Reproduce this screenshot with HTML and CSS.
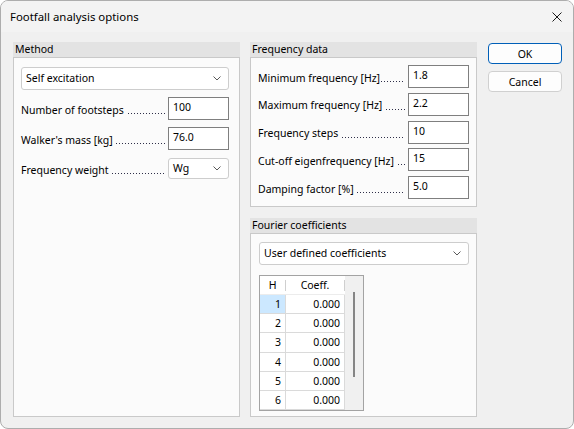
FILE: index.html
```html
<!DOCTYPE html>
<html lang="en">
<head>
    <meta charset="UTF-8">
    <title>Footfall analysis options</title>
    <link rel="stylesheet" href="styles.css">
</head>
<body>
    <div class="window">
        <div class="titlebar">
            <span class="title">Footfall analysis options</span>
            <svg class="close" width="10" height="10" viewBox="0 0 10 10"><path d="M0.5 0.5L9.5 9.5M9.5 0.5L0.5 9.5" stroke="#1b1b1b" stroke-width="1"/></svg>
        </div>

        <div class="content">
            <div class="group method">
                <div class="group-title">Method</div>
                <div class="group-body">
                    <div class="select">Self excitation<svg class="chev" width="8" height="5" viewBox="0 0 8 5"><path d="M0.5 0.5L4 4L7.5 0.5" fill="none" stroke="#5a5a5a" stroke-width="1"/></svg></div>

                    <div class="field">
                        <span class="label">Number of footsteps </span><span class="leader"></span>
                        <span class="input">100</span>
                    </div>
                    <div class="field">
                        <span class="label">Walker's mass [kg] </span><span class="leader"></span>
                        <span class="input">76.0</span>
                    </div>
                    <div class="field short">
                        <span class="label">Frequency weight </span><span class="leader"></span>
                        <span class="select small">Wg<svg class="chev" width="8" height="5" viewBox="0 0 8 5"><path d="M0.5 0.5L4 4L7.5 0.5" fill="none" stroke="#5a5a5a" stroke-width="1"/></svg></span>
                    </div>
                </div>
            </div>

            <div class="column">
                <div class="group freq">
                    <div class="group-title">Frequency data</div>
                    <div class="group-body">
                        <div class="field">
                            <span class="label">Minimum frequency [Hz]</span><span class="leader"></span>
                            <span class="input">1.8</span>
                        </div>
                        <div class="field">
                            <span class="label">Maximum frequency [Hz] </span><span class="leader"></span>
                            <span class="input">2.2</span>
                        </div>
                        <div class="field">
                            <span class="label">Frequency steps </span><span class="leader"></span>
                            <span class="input">10</span>
                        </div>
                        <div class="field">
                            <span class="label">Cut-off eigenfrequency [Hz] </span><span class="leader"></span>
                            <span class="input">15</span>
                        </div>
                        <div class="field">
                            <span class="label">Damping factor [%] </span><span class="leader"></span>
                            <span class="input">5.0</span>
                        </div>
                    </div>
                </div>

                <div class="group fourier">
                    <div class="group-title">Fourier coefficients</div>
                    <div class="group-body">
                        <div class="select">User defined coefficients<svg class="chev" width="8" height="5" viewBox="0 0 8 5"><path d="M0.5 0.5L4 4L7.5 0.5" fill="none" stroke="#5a5a5a" stroke-width="1"/></svg></div>

                        <div class="grid">
                            <table>
                                <tr><th class="h">H</th><th>Coeff.</th></tr>
                                <tr><td class="h current">1</td><td>0.000</td></tr>
                                <tr><td class="h">2</td><td>0.000</td></tr>
                                <tr><td class="h">3</td><td>0.000</td></tr>
                                <tr><td class="h">4</td><td>0.000</td></tr>
                                <tr><td class="h">5</td><td>0.000</td></tr>
                                <tr><td class="h">6</td><td>0.000</td></tr>
                            </table>
                            <div class="scroll"><div class="thumb"></div></div>
                        </div>
                    </div>
                </div>
            </div>

            <div class="buttons">
                <button class="default">OK</button>
                <button>Cancel</button>
            </div>
        </div>
    </div>
</body>
</html>
```

FILE: styles.css
```css
body {
    margin: 0;
    background-color: #ffffff;
    font-family: "Noto Sans", sans-serif;
    font-size: 10.5px;
    color: #000;
}
.window {
    width: 574px;
    height: 429px;
    box-sizing: border-box;
    border: 1px solid #adadad;
    border-radius: 8px;
    background-color: #f0f0f0;
    overflow: hidden;
}
.titlebar {
    height: 31px;
    display: flex;
    align-items: center;
    justify-content: space-between;
    padding: 0 11px 0 9px;
    background-color: #f3f3f3;
}
.title {
    font-size: 11.4px;
}
.content {
    display: flex;
    padding: 10px 11px 0 12px;
}
.group {
    display: flex;
    flex-direction: column;
    flex-shrink: 0;
    width: 227px;
}
.group-title {
    height: 15px;
    line-height: 14px;
    padding-left: 2px;
    background-color: #e3e3e3;
}
.group-body {
    flex: 1;
    border: 1px solid #c9c9c9;
    background-color: #fbfbfb;
}
.method {
    height: 375px;
}
.method .group-body {
    padding: 9px 10px 0 7px;
}
.column {
    display: flex;
    flex-direction: column;
    margin-left: 10px;
}
.freq {
    height: 165px;
}
.freq .group-body {
    display: flex;
    flex-direction: column;
    gap: 4.75px;
    padding: 7px 7px 0 7px;
}
.fourier {
    height: 199px;
    margin-top: 11px;
}
.fourier .group-body {
    padding: 8px 7px 0 8px;
}
.select {
    position: relative;
    height: 23px;
    box-sizing: border-box;
    border: 1px solid #cdcdcd;
    border-radius: 3px;
    background-color: #fff;
    padding-left: 4px;
    line-height: 20px;
}
.select.small {
    display: block;
    width: 61px;
    height: 21px;
    line-height: 18px;
}
.chev {
    position: absolute;
    right: 7px;
    top: 8px;
}
.select.small .chev {
    top: 7px;
}
.field {
    display: flex;
    align-items: center;
    height: 23px;
}
.method .field {
    margin-top: 7px;
}
.label {
    white-space: pre;
    padding-top: 2px;
}
.leader {
    flex: 1;
    align-self: flex-end;
    height: 1px;
    margin: 0 3px 6px 1px;
    background-image: linear-gradient(to right, #2e2e48 1px, transparent 1px);
    background-size: 3px 1px;
    background-repeat: repeat-x;
}
.input {
    width: 61px;
    height: 23px;
    box-sizing: border-box;
    border: 1px solid #7f7f7f;
    background-color: #fff;
    padding: 0 4px;
    line-height: 19px;
}
.grid {
    display: flex;
    width: 105px;
    height: 136px;
    box-sizing: border-box;
    margin-top: 10px;
    border: 1px solid #a3a3a3;
    background-color: #fff;
}
table {
    border-collapse: collapse;
    width: 85px;
}
th, td {
    height: 18px;
    padding: 0 4px;
    font-weight: normal;
    border-bottom: 1px solid #dadada;
    border-right: 1px solid #dadada;
}
th {
    position: relative;
    text-align: center;
    border-right: none;
    border-bottom: 1px solid #ececec;
}
th::after {
    content: "";
    position: absolute;
    right: 0;
    top: 4px;
    bottom: 3px;
    width: 1px;
    background-color: #cfcfcf;
}
td {
    text-align: right;
}
.h {
    width: 17px;
}
td.current {
    background-color: #cce8ff;
}
.scroll {
    flex: 1;
    background-color: #f0f0f0;
}
.thumb {
    width: 2px;
    height: 85px;
    margin: 16px 0 0 8px;
    background-color: #858585;
}
.buttons {
    display: flex;
    flex-direction: column;
    gap: 7px;
    margin-left: 11px;
    padding-top: 1px;
}
button {
    width: 74px;
    height: 21px;
    padding: 0;
    border: 1px solid #d0d0d0;
    border-radius: 4px;
    background-color: #fdfdfd;
    font-family: inherit;
    font-size: 10.5px;
    color: #000;
}
button.default {
    border-color: #005fb8;
}
```
